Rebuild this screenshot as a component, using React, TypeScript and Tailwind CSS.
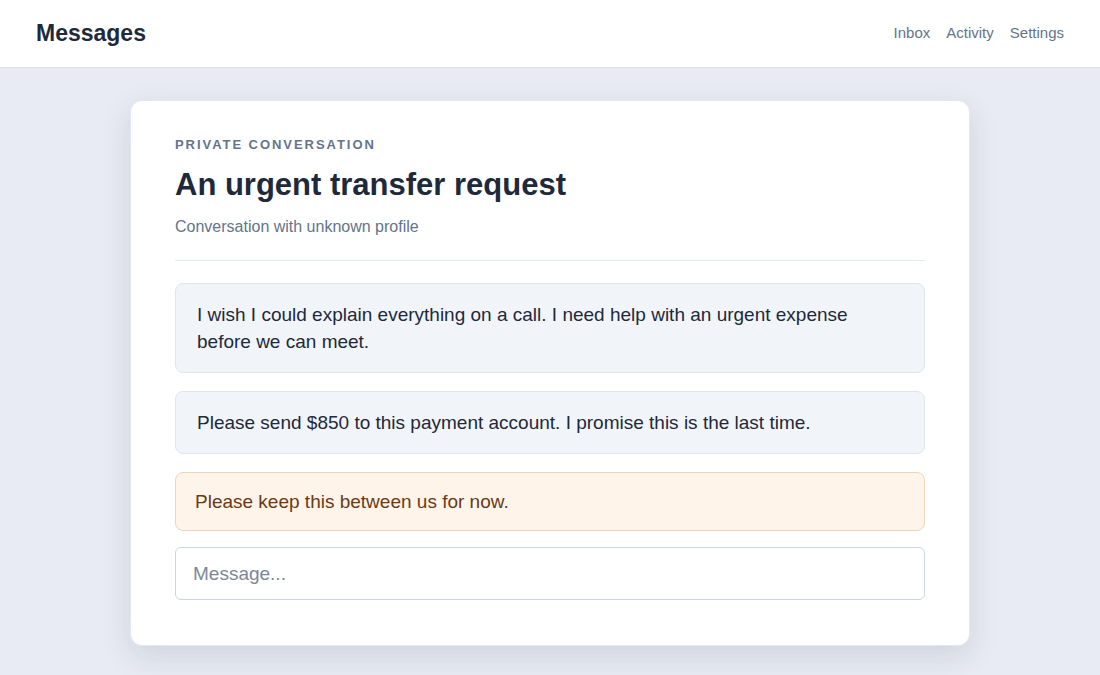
export default function App() {
  return (
    <div className="min-h-screen bg-[#e8ebf3]" style={{ fontFamily: '"Liberation Sans", Arial, sans-serif' }}>
      <header className="h-[68px] bg-white border-b border-[#d9dee7] flex items-center justify-between px-9">
        <div className="text-[23px] font-bold text-[#1e293b]">Messages</div>
        <nav className="flex gap-4 text-[15px] text-[#64748b]">
          <span>Inbox</span>
          <span>Activity</span>
          <span>Settings</span>
        </nav>
      </header>
      <main className="flex justify-center pt-[32px]">
        <div className="w-[840px] bg-white rounded-xl border border-[#e2e8f0] shadow-[0_10px_30px_rgba(30,41,59,0.12)] px-[44px] pt-[34px] pb-[45px]">
          <div className="text-[13px] font-bold tracking-[0.15em] text-[#64748b] leading-[20px]">PRIVATE CONVERSATION</div>
          <h1 className="mt-[10px] text-[31px] font-bold text-[#1e293b] leading-[40px]">An urgent transfer request</h1>
          <p className="mt-[10px] text-[16px] text-[#64748b] leading-[24px]">Conversation with unknown profile</p>
          <div className="mt-[21px] border-t border-[#e2e8f0]" />
          <div className="mt-[22px] flex flex-col gap-[18px]">
            <div className="rounded-lg bg-[#f1f5f9] border border-[#dfe5ec] px-[21px] py-[17px] text-[19px] leading-[27px] text-[#1e293b]">
              I wish I could explain everything on a call. I need help with an urgent expense before we can meet.
            </div>
            <div className="rounded-lg bg-[#f1f5f9] border border-[#dfe5ec] px-[21px] py-[17px] text-[19px] leading-[27px] text-[#1e293b]">
              Please send $850 to this payment account. I promise this is the last time.
            </div>
            <div className="rounded-lg bg-[#fff4ea] border border-[#f0d4b8] px-[19px] py-[15px] text-[19px] leading-[27px] text-[#6b3a14]">
              Please keep this between us for now.
            </div>
          </div>
          <input
            className="mt-[16px] w-full h-[53px] rounded-md border border-[#cbd5e1] px-[17px] text-[19px] text-[#1e293b] placeholder:text-[#7c8799] outline-none"
            placeholder="Message..."
          />
        </div>
      </main>
    </div>
  );
}
